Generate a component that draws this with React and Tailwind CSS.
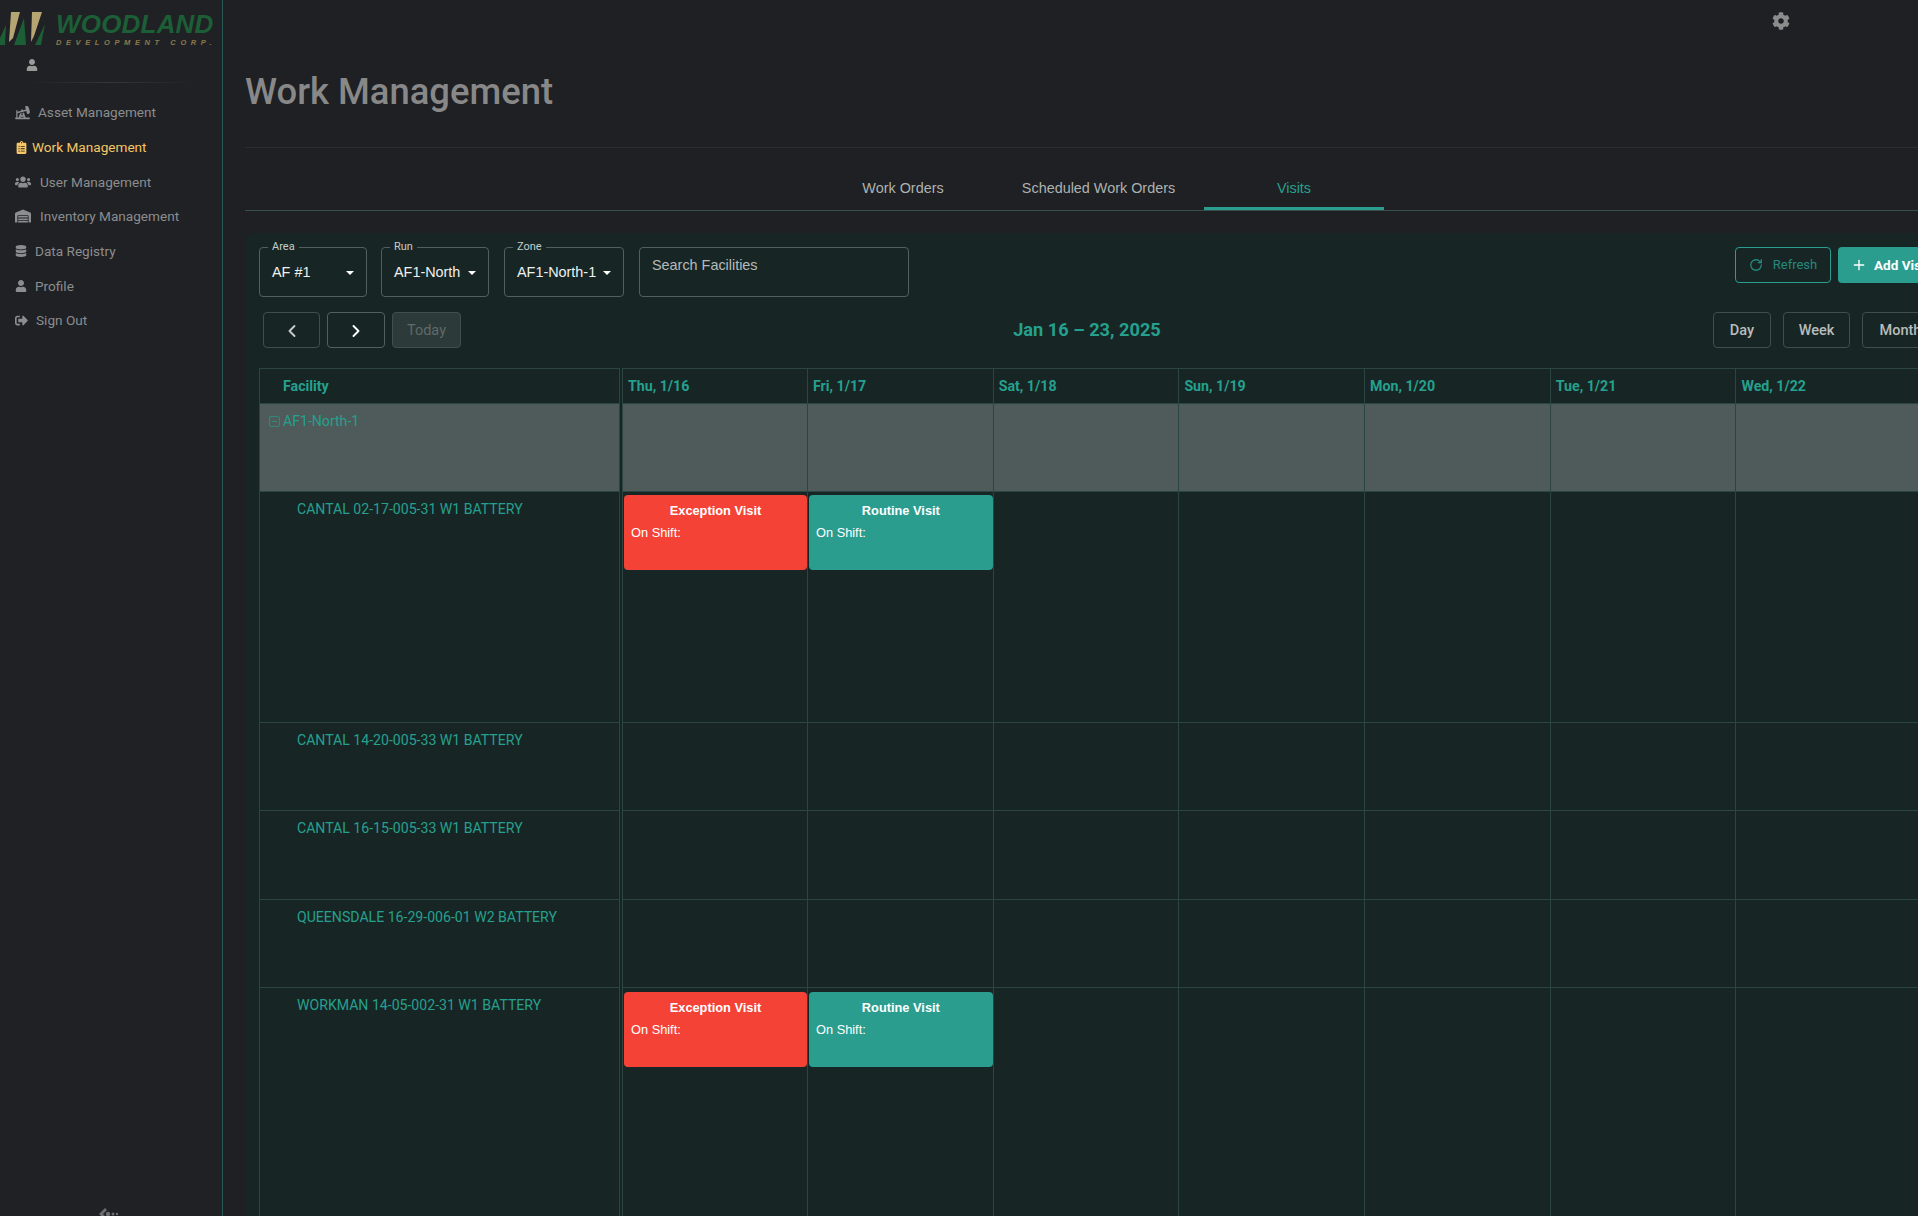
import React from "react";
import { FaOilWell } from "react-icons/fa6";
import {
  FaClipboardList,
  FaUsers,
  FaWarehouse,
  FaDatabase,
  FaUser,
  FaSignOutAlt,
  FaCog,
} from "react-icons/fa";
import { ChevronLeft, ChevronRight, Plus, RotateCw, SquareMinus } from "lucide-react";

const navItems = [
  { label: "Asset Management", icon: FaOilWell, size: 15, gap: "gap-[8px]" },
  { label: "Work Management", icon: FaClipboardList, size: 13, gap: "gap-[4px]", active: true },
  { label: "User Management", icon: FaUsers, size: 16, gap: "gap-[9px]" },
  { label: "Inventory Management", icon: FaWarehouse, size: 16, gap: "gap-[9px]" },
  { label: "Data Registry", icon: FaDatabase, size: 12, gap: "gap-[8px]" },
  { label: "Profile", icon: FaUser, size: 12, gap: "gap-[8px]" },
  { label: "Sign Out", icon: FaSignOutAlt, size: 13, gap: "gap-[8px]" },
];

const days = ["Thu, 1/16", "Fri, 1/17", "Sat, 1/18", "Sun, 1/19", "Mon, 1/20", "Tue, 1/21", "Wed, 1/22"];

const rows = [
  { name: "CANTAL 02-17-005-31 W1 BATTERY", height: "h-[231px]", visitTop: "pt-[3px]" },
  { name: "CANTAL 14-20-005-33 W1 BATTERY", height: "h-[88px]" },
  { name: "CANTAL 16-15-005-33 W1 BATTERY", height: "h-[89px]" },
  { name: "QUEENSDALE 16-29-006-01 W2 BATTERY", height: "h-[88px]" },
  { name: "WORKMAN 14-05-002-31 W1 BATTERY", height: "h-[231px]", visitTop: "pt-[4px]" },
];

function Logo() {
  return (
    <div className="flex h-[54px] items-start pt-[11px]">
      <svg width="46" height="36" viewBox="0 0 46 36" className="mt-[1px] shrink-0">
        <polygon points="11,0 20,0 13,26 9,30" fill="#b5a572" />
        <polygon points="32,0 42,0 34,24 31,30" fill="#b5a572" />
        <polygon points="0,33 5,33 6,13 0,26" fill="#1c5e36" />
        <polygon points="14,33 26,33 24,6" fill="#1c5e36" />
        <polygon points="35,33 41,33 45,12" fill="#1c5e36" />
      </svg>
      <div className="ml-[10px] font-['Liberation_Sans'] italic">
        <div className="text-[26px] font-bold leading-[26px] tracking-[0.2px] text-[#1c5e36]">WOODLAND</div>
        <div className="mt-[1px] whitespace-nowrap text-[7.5px] font-bold leading-[9px] tracking-[4.6px] text-[#8a7b50]">
          DEVELOPMENT CORP.
        </div>
      </div>
    </div>
  );
}

function Sidebar() {
  return (
    <aside className="flex h-full w-[223px] shrink-0 flex-col overflow-hidden border-r border-[#2a5a55] bg-[#1f2124] font-['Roboto',sans-serif]">
      <Logo />
      <div className="pl-[26px] pt-[5px] text-[#9a9a9a]">
        <FaUser size={12} />
      </div>
      <div className="mx-[26px] mt-[11px] h-px bg-gradient-to-r from-transparent via-[#33363a] to-transparent" />
      <nav className="mt-[12px] flex flex-col">
        {navItems.map((item) => {
          const Icon = item.icon;
          return (
            <div
              key={item.label}
              className={`flex h-[34.7px] items-center pl-[15px] text-[13.6px] ${item.gap} ${
                item.active ? "text-[#f5c766]" : "text-[#8b8d8f]"
              }`}
            >
              <Icon size={item.size} />
              <span>{item.label}</span>
            </div>
          );
        })}
      </nav>
      <div className="mt-auto -mb-[4px] flex justify-center pr-[4px]">
        <svg width="20" height="12" viewBox="0 0 20 12" fill="#6b6d70">
          <polygon points="6,0 8,2 4,6 8,10 6,12 0,6" />
          <circle cx="9" cy="6" r="2.2" />
          <circle cx="14" cy="6" r="1.5" />
          <circle cx="18" cy="6" r="1.2" />
        </svg>
      </div>
    </aside>
  );
}

function Select({ label, value, width }) {
  return (
    <div className={`relative flex h-[50px] items-center justify-between rounded-[4px] border border-[#51605e] pl-[12px] pr-[12px] pt-[1px] ${width}`}>
      <span className="absolute -top-[8px] left-[8px] bg-[#172625] px-[4px] font-['Roboto',sans-serif] text-[11px] leading-[14px] text-[#c6cccb]">
        {label}
      </span>
      <span className="font-['Liberation_Sans',sans-serif] text-[14.4px] text-[#eef1f0]">{value}</span>
      <span className="h-0 w-0 border-x-[4.5px] border-t-[4.5px] border-x-transparent border-t-white" />
    </div>
  );
}

function ViewButton({ children, width }) {
  return (
    <button className={`flex h-[36px] items-center justify-center rounded-[4px] border border-[#3f4f4d] pt-[2px] text-[14.5px] font-medium text-[#b8bcbb] ${width}`}>
      {children}
    </button>
  );
}

function Visit({ title, color }) {
  return (
    <div className={`h-[75px] rounded-[4px] pl-[7px] pt-[8px] font-['Liberation_Sans',sans-serif] text-white ${color}`}>
      <div className="pr-[7px] text-center text-[12.8px] font-bold leading-[16px]">{title}</div>
      <div className="mt-[6px] text-[12.8px] leading-[16px]">On Shift:</div>
    </div>
  );
}

function Row({ height, facility, cellBg, visitTop }) {
  return (
    <div className={`flex ${height}`}>
      <div className={`w-[361px] shrink-0 border-x border-b border-[#2a4542] ${cellBg}`}>{facility}</div>
      {days.map((day, i) => (
        <div
          key={day}
          className={`shrink-0 border-r border-b border-[#2a4542] pl-px ${cellBg} ${
            i === 0 ? "ml-[2px] w-[186px] border-l" : "w-[185.7px]"
          } ${visitTop || ""}`}
        >
          {visitTop && i === 0 && <Visit title="Exception Visit" color="bg-[#f44336]" />}
          {visitTop && i === 1 && <Visit title="Routine Visit" color="bg-[#2a9d8f]" />}
        </div>
      ))}
    </div>
  );
}

function Calendar() {
  return (
    <div className="mt-[20px] w-[1680px] font-['Roboto',sans-serif]">
      <div className="flex h-[36px] text-[14.2px] font-bold text-[#26a08e]">
        <div className="flex w-[361px] shrink-0 items-center border border-[#2a4542] pl-[23px] pt-[2px]">Facility</div>
        {days.map((day, i) => (
          <div
            key={day}
            className={`flex shrink-0 items-center border-y border-r border-[#2a4542] pl-[5px] pt-[2px] ${
              i === 0 ? "ml-[2px] w-[186px] border-l" : "w-[185.7px]"
            }`}
          >
            {day}
          </div>
        ))}
      </div>
      <Row
        height="h-[88px]"
        cellBg="bg-[#4f5b5a]"
        facility={
          <div className="flex items-center gap-[2px] pl-[8px] pt-[9px] text-[14.1px] leading-[16px] text-[#26a08e]">
            <SquareMinus size={13} strokeWidth={1.25} />
            <span>AF1-North-1</span>
          </div>
        }
      />
      {rows.map((row) => (
        <Row
          key={row.name}
          height={row.height}
          visitTop={row.visitTop}
          cellBg=""
          facility={
            <div className="pl-[37px] pt-[9px] text-[14.1px] leading-[16px] text-[#26a08e]">{row.name}</div>
          }
        />
      ))}
    </div>
  );
}

export default function App() {
  return (
    <div className="flex h-[1216px] w-[1918px] overflow-hidden bg-[#1e2023]">
      <Sidebar />
      <main className="min-w-0 flex-1 overflow-hidden pl-[22px]">
        <div className="w-[1707px]">
          <div className="flex h-[43px] justify-end pt-[12px] pr-[162px] text-[#8c8c8c]">
            <FaCog size={18} />
          </div>
          <h1 className="h-[105px] border-b border-[#2b2d30] pt-[25px] font-['Roboto',sans-serif] text-[36.4px] font-medium leading-[48px] text-[#888888]">
            Work Management
          </h1>
          <div className="mt-[20px] flex h-[43px] justify-center border-b border-[#37504c] font-['Liberation_Sans',sans-serif] text-[14.4px] text-[#aeb2b1]">
            <div className="flex w-[180px] items-center justify-center pb-[1px]">Work Orders</div>
            <div className="flex w-[211px] items-center justify-center pb-[1px]">Scheduled Work Orders</div>
            <div className="flex w-[180px] items-center justify-center rounded-t-[2px] border-b-[3px] border-[#2a9d8f] pt-[2px] text-[#26a08e]">
              Visits
            </div>
          </div>
          <section className="mt-[22px] h-[1000px] rounded-[10px] bg-[#172625] pl-[14px] pr-[7px] pt-[14px]">
            <div className="flex items-start">
              <Select label="Area" value="AF #1" width="w-[108px]" />
              <div className="w-[14px]" />
              <Select label="Run" value="AF1-North" width="w-[108px]" />
              <div className="w-[15px]" />
              <Select label="Zone" value="AF1-North-1" width="w-[120px]" />
              <div className="w-[15px]" />
              <div className="h-[50px] w-[270px] rounded-[4px] border border-[#51605e] pl-[12px] pt-[8px] font-['Liberation_Sans',sans-serif] text-[14.4px] leading-[18px] text-[#b6bbba]">
                Search Facilities
              </div>
              <div className="ml-auto flex gap-[7px]">
                <button className="flex h-[36px] w-[96px] items-center justify-center gap-[10px] rounded-[4px] border border-[#2a9d8f] font-['Roboto',sans-serif] text-[13px] text-[#26897d]">
                  <RotateCw size={14} strokeWidth={2.25} />
                  Refresh
                </button>
                <button className="flex h-[36px] w-[107px] items-center gap-[7px] rounded-[4px] bg-[#2a9d8f] pl-[13px] font-['Roboto',sans-serif] text-[13.5px] font-bold whitespace-nowrap text-white">
                  <Plus size={16} strokeWidth={2} />
                  Add Visit
                </button>
              </div>
            </div>
            <div className="mt-[15px] flex items-center pl-[4px]">
              <div className="flex w-[198px] shrink-0 gap-[7px]">
                <button className="flex h-[36px] w-[57px] items-center justify-center rounded-[4px] border border-[#3f4f4d] pt-[2px] text-[#c9cdcc]">
                  <ChevronLeft size={20} strokeWidth={2.25} />
                </button>
                <button className="flex h-[36px] w-[58px] items-center justify-center rounded-[4px] border border-[#51605e] pt-[2px] text-white">
                  <ChevronRight size={20} strokeWidth={2.25} />
                </button>
                <button className="flex h-[36px] w-[69px] items-center justify-center rounded-[4px] border border-[#3f4f4d] bg-[#2c3a39] pt-[2px] font-['Roboto',sans-serif] text-[14.5px] text-[#5f6b6a]">
                  Today
                </button>
              </div>
              <div className="flex-1 text-center font-['Roboto',sans-serif] text-[18.2px] font-bold text-[#26a08e]">
                Jan 16 – 23, 2025
              </div>
              <div className="flex w-[232px] shrink-0 gap-[12px] font-['Roboto',sans-serif]">
                <ViewButton width="w-[58px]">Day</ViewButton>
                <ViewButton width="w-[67px]">Week</ViewButton>
                <ViewButton width="w-[77px]">Month</ViewButton>
              </div>
            </div>
            <Calendar />
          </section>
        </div>
      </main>
    </div>
  );
}
